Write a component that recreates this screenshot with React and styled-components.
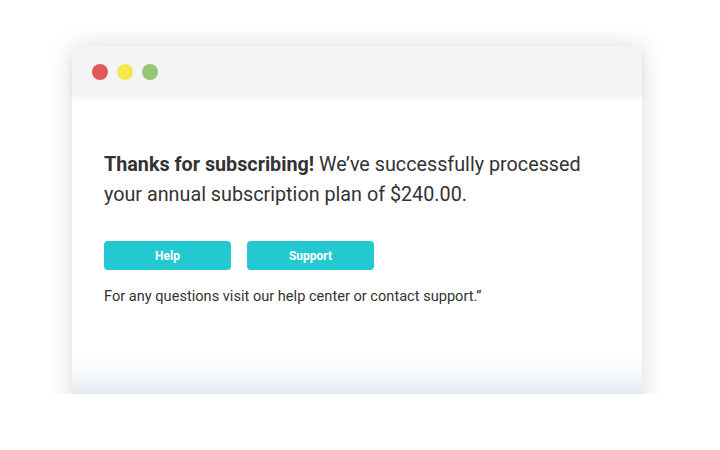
import React from 'react'
import styled, { createGlobalStyle } from 'styled-components'

const Global = createGlobalStyle`
	html, body {
		margin: 0;
		background: #ffffff;
		font-family: Roboto, 'Liberation Sans', sans-serif;
	}
`

const Stage = styled.div`
	height: 394px;
	overflow: hidden;
	padding: 46px 0 0 72px;
	box-sizing: border-box;
`

const Window = styled.div`
	width: 570px;
	height: 400px;
	border-radius: 10px 10px 0 0;
	background: linear-gradient(to bottom, #ffffff 0, #ffffff 305px, #f7f9fb 326px, #e4e9f1 348px);
	box-shadow: 0 0 26px rgba(0, 0, 0, 0.14);
	display: flex;
	flex-direction: column;
`

const TitleBar = styled.div`
	height: 49px;
	flex-shrink: 0;
	background: #f4f4f6;
	border-radius: 10px 10px 0 0;
	display: flex;
	align-items: center;
	gap: 9px;
	padding: 2px 0 0 20px;
	box-sizing: border-box;
	box-shadow: 0 3px 7px rgba(0, 0, 0, 0.06);
	position: relative;
`

const Dot = styled.span`
	width: 16px;
	height: 16px;
	border-radius: 50%;
	background: ${(p) => p.color};
`

const Body = styled.div`
	padding: 55px 32px 0;
	color: #333333;
`

const Lead = styled.p`
	margin: 0;
	font-size: 19.75px;
	line-height: 30px;
	width: 500px;

	strong {
		font-weight: 700;
	}
`

const Buttons = styled.div`
	display: flex;
	gap: 16px;
	margin-top: 31px;
`

const Button = styled.button`
	width: 127px;
	height: 29px;
	border: none;
	border-radius: 4px;
	background: #24c8d1;
	color: #ffffff;
	font-family: Roboto, 'Liberation Sans', sans-serif;
	font-weight: 700;
	font-size: 12px;
	padding: 0;
`

const Note = styled.p`
	margin: 16px 0 0;
	font-size: 14.6px;
	line-height: 20px;
`

export default function App() {
	return (
		<>
			<Global />
			<Stage>
				<Window>
					<TitleBar>
						<Dot color="#e05858" />
						<Dot color="#f3e94f" />
						<Dot color="#98c674" />
					</TitleBar>
					<Body>
						<Lead>
							<strong>Thanks for subscribing!</strong> We’ve successfully processed your annual
							subscription plan of $240.00.
						</Lead>
						<Buttons>
							<Button>Help</Button>
							<Button>Support</Button>
						</Buttons>
						<Note>For any questions visit our help center or contact support.”</Note>
					</Body>
				</Window>
			</Stage>
		</>
	)
}
